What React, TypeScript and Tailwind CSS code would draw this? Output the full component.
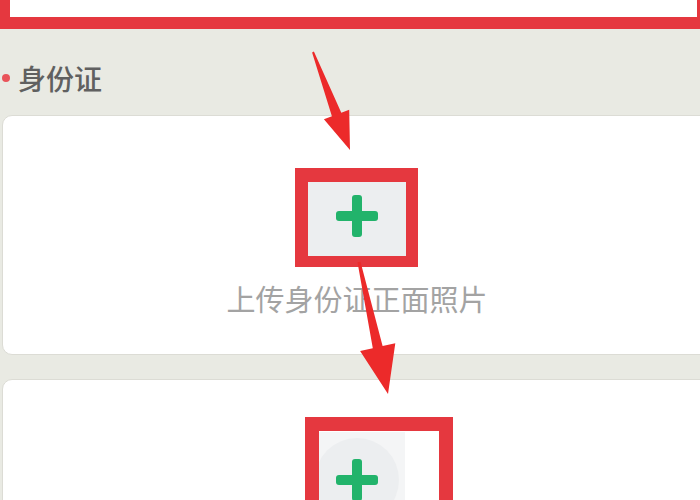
import React from "react";

type Pt = [number, number];

// tapered annotation arrow, drawn tail -> tip
const arrowPath = (
  from: Pt,
  to: Pt,
  tailW: number,
  neckW: number,
  headW: number,
  headLen: number
) => {
  const [x1, y1] = from;
  const [x2, y2] = to;
  const dx = x2 - x1;
  const dy = y2 - y1;
  const len = Math.hypot(dx, dy);
  const ux = dx / len;
  const uy = dy / len;
  const nx = -uy;
  const ny = ux;
  const bx = x2 - ux * headLen;
  const by = y2 - uy * headLen;
  const p = (x: number, y: number, w: number, s: number) =>
    `${(x + nx * w * s).toFixed(1)},${(y + ny * w * s).toFixed(1)}`;
  return [
    p(x1, y1, tailW / 2, 1),
    p(bx, by, neckW / 2, 1),
    p(bx, by, headW / 2, 1),
    `${x2},${y2}`,
    p(bx, by, headW / 2, -1),
    p(bx, by, neckW / 2, -1),
    p(x1, y1, tailW / 2, -1),
  ].join(" ");
};

const Plus = () => (
  <svg width="42" height="42" viewBox="0 0 42 42">
    <rect x="16" y="0" width="10" height="42" rx="3" fill="#22b36b" />
    <rect x="0" y="16" width="42" height="10" rx="3" fill="#22b36b" />
  </svg>
);

export default function App() {
  return (
    <div className="relative w-[700px] h-[500px] overflow-hidden bg-[#e9eae3] font-['Noto_Sans_CJK_SC','Noto_Sans',sans-serif]">
      {/* highlighted field above, cut off by the top edge */}
      <div className="h-[29px] w-[709px] bg-white border-[#e5383f] border-l-[10px] border-r-[12px] border-b-[12px]" />

      <div className="mt-[32px] h-[34px] flex items-center pl-[2px] gap-[8px]">
        <span className="size-[8px] rounded-full bg-[#e9545a]" />
        <span className="text-[28px] leading-none font-medium text-[#606060]">身份证</span>
      </div>

      {/* front side */}
      <div className="relative ml-[2px] mt-[20px] w-[710px] h-[240px] bg-white rounded-[10px] border border-[#dcdcd5] flex flex-col items-center">
        <div className="mt-[56px] w-[100px] h-[88px] bg-[#eceef0] flex items-center justify-center">
          <Plus />
        </div>
        <div className="mt-[18px] text-[29px] leading-[40px] text-[#a3a3a3]">上传身份证正面照片</div>
        <div className="absolute left-[292px] top-[52px] w-[123px] h-[99px] border-[#e5383f] border-l-[13px] border-r-[12px] border-t-[14px] border-b-[11px]" />
      </div>

      {/* back side */}
      <div className="relative ml-[2px] mt-[24px] w-[710px] h-[200px] bg-white rounded-[10px] border border-[#dcdcd5] flex flex-col items-center">
        <div className="mt-[52px] w-[96px] h-[110px] bg-[#f4f5f6] flex items-start justify-center">
          <div className="mt-[6px] size-[84px] rounded-full bg-[#eceef0] flex items-center justify-center">
            <Plus />
          </div>
        </div>
        <div className="absolute left-[302px] top-[37px] w-[148px] h-[130px] border-[#e5383f] border-[14px]" />
      </div>

      {/* annotation arrows */}
      <svg className="absolute inset-0 pointer-events-none" width="700" height="500">
        <polygon points={arrowPath([313, 52], [350, 150], 2, 10, 27, 38)} fill="#ec2a2a" />
        <polygon points={arrowPath([359, 262], [388, 394], 3, 10, 36, 48)} fill="#ec2a2a" />
      </svg>
    </div>
  );
}
